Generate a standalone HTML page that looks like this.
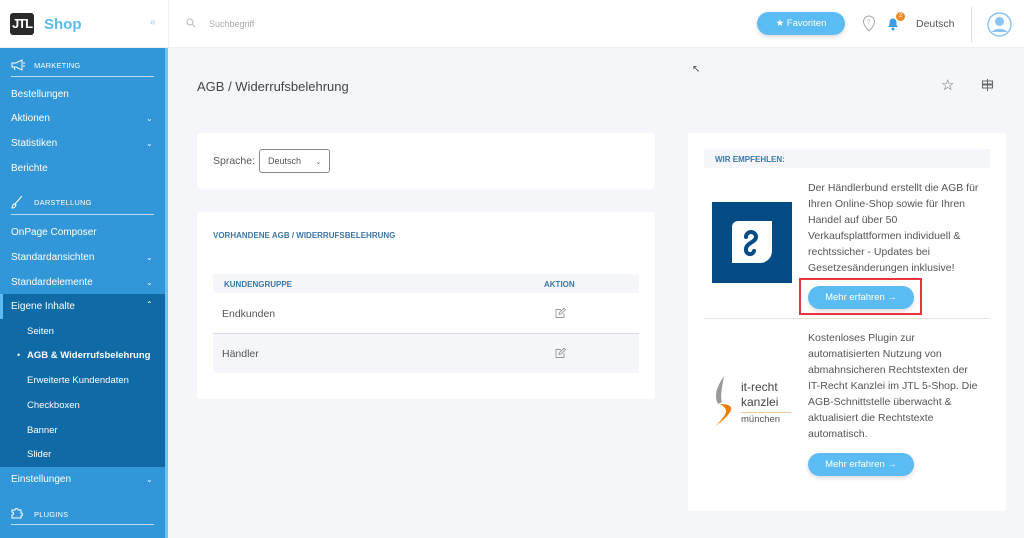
<!DOCTYPE html>
<html><head><meta charset="utf-8"><style>
*{box-sizing:border-box;margin:0;padding:0}
body{width:1024px;height:538px;overflow:hidden;font-family:"Liberation Sans",sans-serif;background:#f4f6fa;position:relative;color:#555}
.abs{position:absolute}
#side{left:0;top:48px;width:165px;height:490px;background:#3197d8}
#stripe{left:165px;top:48px;width:3px;height:490px;background:#6fc1f3}
.si{position:absolute;left:11px;font-size:10px;color:#fff;white-space:nowrap}
.sec{position:absolute;left:34px;font-size:7.5px;color:#fff;letter-spacing:.2px}
.line{position:absolute;left:11px;width:143px;height:1px;background:#b8dcf3}
.chev{position:absolute;left:146px;font-size:8px;color:#fff}
.sub{position:absolute;left:27px;font-size:9.5px;color:#fff}
.card{position:absolute;background:#fff;border-radius:3px}
.btn{position:absolute;background:#5bbcf4;color:#fff;font-size:9.5px;border-radius:12px;text-align:center;line-height:23px;box-shadow:0 2px 4px rgba(0,0,0,.15)}
.p{position:absolute;left:808px;font-size:10.5px;line-height:16px;color:#555;width:174px}
</style></head><body>
<div class="abs" style="left:0;top:0;width:1024px;height:48px;background:#fff;border-bottom:1px solid #eceff3"></div>
<div class="abs" style="left:10px;top:13px;width:24px;height:22px;background:#2a2a2a;border-radius:3px;color:#fff;font-weight:bold;font-size:13px;line-height:22px;text-align:center;letter-spacing:-1px">JTL</div>
<div class="abs" style="left:44px;top:16px;font-size:15px;font-weight:bold;color:#5bbcf4">Shop</div>
<div class="abs" style="left:150px;top:17px;font-size:10px;color:#9ccfee">«</div>
<div class="abs" style="left:168px;top:0;width:1px;height:48px;background:#eceff3"></div>
<svg class="abs" style="left:186px;top:18px" width="10" height="10" viewBox="0 0 10 10"><circle cx="4" cy="4" r="3" fill="none" stroke="#bbb"/><path d="M6.2 6.2L9 9" stroke="#bbb"/></svg>
<div class="abs" style="left:209px;top:19px;font-size:9px;color:#aaa">Suchbegriff</div>
<div class="btn" style="left:757px;top:12px;width:88px;height:23px">★ Favoriten</div>
<svg class="abs" style="left:862px;top:15px" width="14" height="18" viewBox="0 0 14 18"><path d="M7 1a5.5 5.5 0 0 0-5.5 5.5C1.5 11 7 16 7 16s5.5-5 5.5-9.5A5.5 5.5 0 0 0 7 1z" fill="none" stroke="#aaa" stroke-width="1"/><text x="5" y="9" font-size="6" fill="#aaa">?</text></svg>
<svg class="abs" style="left:886px;top:16px" width="14" height="15" viewBox="0 0 14 15"><path d="M2 11h10l-1.5-2V6a3.5 3.5 0 0 0-7 0v3z" fill="#3a9ee6"/><circle cx="7" cy="13" r="1.5" fill="#3a9ee6"/></svg>
<div class="abs" style="left:896px;top:12px;width:9px;height:9px;border-radius:50%;background:#f08a24;color:#fff;font-size:6px;text-align:center;line-height:9px">2</div>
<div class="abs" style="left:916px;top:18px;font-size:10.5px;color:#555">Deutsch</div>
<div class="abs" style="left:971px;top:7px;width:1px;height:35px;background:#ddd"></div>
<svg class="abs" style="left:987px;top:12px" width="25" height="25" viewBox="0 0 25 25"><circle cx="12.5" cy="12.5" r="11.5" fill="#fff" stroke="#8cc4ef" stroke-width="1.5"/><circle cx="12.5" cy="9.5" r="4.5" fill="#8cc4ef"/><path d="M4.5 20a9 6 0 0 1 16 0" fill="#8cc4ef"/></svg>

<div id="side" class="abs"></div><div id="stripe" class="abs"></div>
<svg class="abs" style="left:11px;top:59px" width="15" height="12" viewBox="0 0 15 12"><path d="M1 4h4l6-3v10l-6-3H1zM3 8l1 3M12 4h2M12 7h2" fill="none" stroke="#fff" stroke-width="1"/></svg>
<div class="sec" style="top:61px">MARKETING</div><div class="line" style="top:76px"></div>
<div class="si" style="top:89px">Bestellungen</div>
<div class="si" style="top:113px">Aktionen</div><div class="chev" style="top:114px">⌄</div>
<div class="si" style="top:138px">Statistiken</div><div class="chev" style="top:139px">⌄</div>
<div class="si" style="top:163px">Berichte</div>
<svg class="abs" style="left:11px;top:195px" width="12" height="14" viewBox="0 0 12 14"><path d="M11 1L4 9M2 10c-1 1-1 3-1 3s2 0 3-1l1-2-2-1z" fill="none" stroke="#fff" stroke-width="1"/></svg>
<div class="sec" style="top:198px">DARSTELLUNG</div><div class="line" style="top:214px"></div>
<div class="si" style="top:227px">OnPage Composer</div>
<div class="si" style="top:252px">Standardansichten</div><div class="chev" style="top:253px">⌄</div>
<div class="si" style="top:277px">Standardelemente</div><div class="chev" style="top:278px">⌄</div>
<div class="abs" style="left:0;top:294px;width:165px;height:173px;background:#0f6aa5"></div>
<div class="abs" style="left:0;top:294px;width:3px;height:25px;background:#5bbcf4"></div>
<div class="si" style="top:301px">Eigene Inhalte</div><div class="chev" style="top:300px">⌃</div>
<div class="sub" style="top:326px">Seiten</div>
<div class="abs" style="left:17px;top:350px;color:#fff;font-size:9px">•</div>
<div class="sub" style="top:350px;font-weight:bold">AGB &amp; Widerrufsbelehrung</div>
<div class="sub" style="top:375px">Erweiterte Kundendaten</div>
<div class="sub" style="top:400px">Checkboxen</div>
<div class="sub" style="top:425px">Banner</div>
<div class="sub" style="top:449px">Slider</div>
<div class="si" style="top:474px">Einstellungen</div><div class="chev" style="top:475px">⌄</div>
<svg class="abs" style="left:11px;top:507px" width="14" height="12" viewBox="0 0 14 12"><path d="M1 3h3a1.5 1.5 0 1 1 3 0h3v3a1.5 1.5 0 1 1 0 3v2H1V8a1.5 1.5 0 1 0 0-3z" fill="none" stroke="#fff" stroke-width="1"/></svg>
<div class="sec" style="top:510px">PLUGINS</div><div class="line" style="top:524px"></div>

<div class="abs" style="left:197px;top:79px;font-size:13px;color:#444">AGB / Widerrufsbelehrung</div>
<div class="abs" style="left:941px;top:76px;font-size:15px;color:#666">☆</div>
<svg class="abs" style="left:981px;top:78px" width="13" height="14" viewBox="0 0 13 14"><path d="M6.5 1v12M1.5 3h10v3h-10zM1.5 7h10v3h-10z" fill="none" stroke="#666" stroke-width="1"/></svg>

<div class="card" style="left:197px;top:133px;width:458px;height:56px"></div>
<div class="abs" style="left:213px;top:155px;font-size:10.5px;color:#555">Sprache:</div>
<div class="abs" style="left:259px;top:149px;width:71px;height:24px;border:1px solid #888;border-radius:3px;font-size:9px;color:#555;padding:6px 0 0 8px">Deutsch <span style="margin-left:12px;font-size:7px">⌄</span></div>

<div class="card" style="left:197px;top:212px;width:458px;height:187px"></div>
<div class="abs" style="left:213px;top:231px;font-size:8px;font-weight:bold;color:#3b78a8">VORHANDENE AGB / WIDERRUFSBELEHRUNG</div>
<div class="abs" style="left:213px;top:274px;width:426px;height:19px;background:#f4f6fa"></div>
<div class="abs" style="left:224px;top:280px;font-size:8px;font-weight:bold;color:#3b78a8">KUNDENGRUPPE</div>
<div class="abs" style="left:544px;top:280px;font-size:8px;font-weight:bold;color:#3b78a8">AKTION</div>
<div class="abs" style="left:222px;top:308px;font-size:10.5px;color:#555">Endkunden</div>
<svg class="abs" style="left:555px;top:308px" width="11" height="10" viewBox="0 0 11 10"><path d="M6 1.5H1v8h8V5M4 6.5l.5-2L9 0l1.5 1.5L6 6z" fill="none" stroke="#999" stroke-width=".9"/></svg>
<div class="abs" style="left:213px;top:333px;width:426px;height:40px;background:#f4f6fa;border-top:1px solid #d8dbe0"></div>
<div class="abs" style="left:222px;top:348px;font-size:10.5px;color:#555">Händler</div>
<svg class="abs" style="left:555px;top:348px" width="11" height="10" viewBox="0 0 11 10"><path d="M6 1.5H1v8h8V5M4 6.5l.5-2L9 0l1.5 1.5L6 6z" fill="none" stroke="#999" stroke-width=".9"/></svg>

<div class="card" style="left:688px;top:133px;width:318px;height:378px"></div>
<div class="abs" style="left:704px;top:149px;width:286px;height:19px;background:#f4f6fa"></div>
<div class="abs" style="left:715px;top:155px;font-size:8px;font-weight:bold;color:#3b78a8">WIR EMPFEHLEN:</div>
<div class="abs" style="left:712px;top:202px;width:80px;height:81px;background:#044a85"></div>
<svg class="abs" style="left:730px;top:219px" width="44" height="46" viewBox="0 0 44 46"><path d="M8 2h34v30a12 12 0 0 1-12 12H2V8a6 6 0 0 1 6-6z" fill="#fff"/><path d="M16 18a5 5 0 0 1 10 0c0 5-10 6-10 12a4 4 0 0 0 8 2" fill="none" stroke="#044a85" stroke-width="4" stroke-linecap="round"/></svg>
<div class="p" style="top:180px">Der Händlerbund erstellt die AGB für Ihren Online-Shop sowie für Ihren Handel auf über 50 Verkaufsplattformen individuell &amp; rechtssicher - Updates bei Gesetzesänderungen inklusive!</div>
<div class="btn" style="left:808px;top:286px;width:106px;height:23px">Mehr erfahren →</div>
<div class="abs" style="left:799px;top:278px;width:123px;height:37px;border:2px solid #e8343f"></div>
<div class="abs" style="left:704px;top:318px;width:286px;height:1px;background:#e3e3e3"></div>
<svg class="abs" style="left:712px;top:374px" width="26" height="54" viewBox="0 0 26 54"><path d="M12 2C4 14 2 22 6 30l4-2C8 22 10 14 12 2z" fill="#999"/><path d="M8 30c8 0 14 2 10 8-3 5-8 9-14 14 5-6 10-11 10-15 0-3-3-5-6-7z" fill="#f07d00"/></svg>
<div class="abs" style="left:741px;top:380px;font-size:12px;color:#444;line-height:15px">it-recht<br>kanzlei</div>
<div class="abs" style="left:741px;top:412px;width:50px;height:1px;background:#f5c69a"></div>
<div class="abs" style="left:741px;top:414px;font-size:9.5px;color:#555">münchen</div>
<div class="p" style="top:330px">Kostenloses Plugin zur automatisierten Nutzung von abmahnsicheren Rechtstexten der IT-Recht Kanzlei im JTL 5-Shop. Die AGB-Schnittstelle überwacht &amp; aktualisiert die Rechtstexte automatisch.</div>
<div class="btn" style="left:808px;top:453px;width:106px;height:23px">Mehr erfahren →</div>
<div class="abs" style="left:692px;top:64px;font-size:10px;color:#444">↖</div>
</body></html>
